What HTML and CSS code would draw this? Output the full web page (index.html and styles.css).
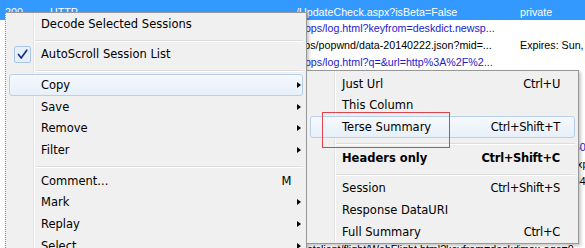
FILE: index.html
```html
<!DOCTYPE html>
<html>
<head>
<meta charset="utf-8">
<title>Fiddler context menu</title>
<link rel="stylesheet" href="styles.css">
</head>
<body>
<div class="list">
  <div class="row sel"><span>200</span><span>HTTP</span><span></span><span>/UpdateCheck.aspx?isBeta=False</span><span>private</span></div>
  <div class="row link"><span>200</span><span>HTTP</span><span>cidian.youdao.com</span><span>/apps/log.html?keyfrom=deskdict.newsp...</span><span></span></div>
  <div class="row"><span>200</span><span>HTTP</span><span>cidian.youdao.com</span><span>/tips/popwnd/data-20140222.json?mid=...</span><span>Expires: Sun, 23 Feb</span></div>
  <div class="row link"><span>200</span><span>HTTP</span><span>cidian.youdao.com</span><span>/apps/log.html?q=&amp;url=http%3A%2F%2...</span><span></span></div>
  <div class="row"><span>200</span><span>HTTP</span><span>cidian.youdao.com</span><span>/tips/popwnd/index.html</span><span></span></div>
  <div class="row"><span>200</span><span>HTTP</span><span>cidian.youdao.com</span><span>/tips/popwnd/style.css</span><span></span></div>
  <div class="row"><span>200</span><span>HTTP</span><span>cidian.youdao.com</span><span>/tips/popwnd/main.js</span><span></span></div>
  <div class="row"><span>200</span><span>HTTP</span><span>cidian.youdao.com</span><span>/tips/popwnd/img/bg.png</span><span></span></div>
  <div class="row link"><span>200</span><span>HTTP</span><span>cidian.youdao.com</span><span>/apps/log.html?keyfrom=deskdict.popwnd</span><span>max-age=3600, |</span></div>
  <div class="row"><span>200</span><span>HTTP</span><span>cidian.youdao.com</span><span>/tips/popwnd/data.json</span><span>no-cache; Expiry</span></div>
  <div class="row"><span>200</span><span>HTTP</span><span>cidian.youdao.com</span><span>/tips/popwnd/config.json</span><span>max-age=86400; g</span></div>
  <div class="row"><span>200</span><span>HTTP</span><span>cidian.youdao.com</span><span>/tips/popwnd/img/logo.png</span><span></span></div>
  <div class="row"><span>200</span><span>HTTP</span><span>cidian.youdao.com</span><span>/tips/popwnd/img/close.png</span><span></span></div>
  <div class="row"><span>200</span><span>HTTP</span><span>cidian.youdao.com</span><span>/tips/popwnd/img/icon.png</span><span></span></div>
  <div class="row"><span>200</span><span>HTTP</span><span>cidian.youdao.com</span><span>/dictclient/flight/WebFlight.html?keyfrom=deskdict.main</span><span>max-age=0</span></div>
</div>

<div class="menu main">
  <div class="item"><span class="icon"></span><span class="label">Decode Selected Sessions</span><span class="key"></span><span></span></div>
  <div class="sep"></div>
  <div class="item"><span class="icon"><span class="check"><svg width="11" height="11" viewBox="0 0 11 11"><path d="M1.5 5.5 L4.2 9 L9.8 1.2" fill="none" stroke="#1c2f83" stroke-width="1.7" stroke-linecap="round" stroke-linejoin="round"/></svg></span></span><span class="label">AutoScroll Session List</span><span class="key"></span><span></span></div>
  <div class="sep"></div>
  <div class="item hot"><span class="icon"></span><span class="label">Copy</span><span class="key"></span><span class="arrow"></span></div>
  <div class="item"><span class="icon"></span><span class="label">Save</span><span class="key"></span><span class="arrow"></span></div>
  <div class="item"><span class="icon"></span><span class="label">Remove</span><span class="key"></span><span class="arrow"></span></div>
  <div class="item"><span class="icon"></span><span class="label">Filter</span><span class="key"></span><span class="arrow"></span></div>
  <div class="sep"></div>
  <div class="item"><span class="icon"></span><span class="label">Comment...</span><span class="key">M</span><span></span></div>
  <div class="item"><span class="icon"></span><span class="label">Mark</span><span class="key"></span><span class="arrow"></span></div>
  <div class="item"><span class="icon"></span><span class="label">Replay</span><span class="key"></span><span class="arrow"></span></div>
  <div class="item"><span class="icon"></span><span class="label">Select</span><span class="key"></span><span class="arrow"></span></div>
</div>

<div class="menu sub">
  <div class="item"><span class="icon"></span><span class="label">Just Url</span><span class="key">Ctrl+U</span><span></span></div>
  <div class="item"><span class="icon"></span><span class="label">This Column</span><span class="key"></span><span></span></div>
  <div class="item hot"><span class="icon"></span><span class="label">Terse Summary</span><span class="key">Ctrl+Shift+T</span><span></span></div>
  <div class="sep"></div>
  <div class="item bold"><span class="icon"></span><span class="label">Headers only</span><span class="key">Ctrl+Shift+C</span><span></span></div>
  <div class="sep"></div>
  <div class="item"><span class="icon"></span><span class="label">Session</span><span class="key">Ctrl+Shift+S</span><span></span></div>
  <div class="item"><span class="icon"></span><span class="label">Response DataURI</span><span class="key"></span><span></span></div>
  <div class="item"><span class="icon"></span><span class="label">Full Summary</span><span class="key">Ctrl+C</span><span></span></div>
</div>

<div class="callout"></div>
</body>
</html>
```

FILE: styles.css
```css
* { box-sizing: border-box; }

html, body {
  margin: 0;
  padding: 0;
}

body {
  width: 585px;
  height: 248px;
  overflow: hidden;
  position: relative;
  background: #fff;
  font-family: "Liberation Sans", Arial, sans-serif;
}

/* session list behind the menus */
.list {
  font-size: 10.7px;
}

.row {
  display: grid;
  grid-template-columns: 45px 45px 201px 224px 90px;
  height: 17px;
  line-height: 17px;
  padding-left: 5px;
  white-space: nowrap;
  color: #000;
}

.row > span {
  overflow: hidden;
}

.row.sel {
  height: 20px;
  padding-top: 5px;
  line-height: 15px;
  background: #3399ff;
  color: #fff;
}

.row.link {
  color: #1c1ccc;
}

/* context menus */
.menu {
  position: absolute;
  background:
    linear-gradient(to right, transparent 27px, #e4e4e4 27px, #e4e4e4 28px, #fbfbfb 28px, #fbfbfb 29px, transparent 29px),
    #f0f0f0;
  border: 1px solid #979797;
  font-family: "DejaVu Sans", sans-serif;
  font-size: 11.5px;
  color: #000;
  box-shadow: 2px 2px 3px rgba(0, 0, 0, 0.22);
}

.menu.main {
  left: 5px;
  top: 12px;
  width: 302px;
  height: 250px;
  border-left: 1px dotted #8c8c8c;
}

.menu.sub {
  left: 306px;
  top: 70px;
  width: 273px;
  height: 174px;
  padding-top: 2px;
  z-index: 1;
}

.item {
  display: grid;
  grid-template-columns: 31px 1fr auto 11px;
  align-items: center;
  height: 21.67px;
  margin: 0 3px;
  border: 1px solid transparent;
  border-radius: 3px;
  white-space: nowrap;
}

.item.hot {
  border-color: #b8d0ec;
  background: linear-gradient(#f6f9fd, #e7eff9);
}

.item.bold {
  font-weight: bold;
}

.icon {
  display: flex;
  align-items: center;
}

.key {
  text-align: right;
  letter-spacing: -0.3px;
}

.sub .key {
  padding-right: 3px;
}

.arrow {
  width: 0;
  height: 0;
  margin-left: 6px;
  border-left: 4px solid #000;
  border-top: 3.5px solid transparent;
  border-bottom: 3.5px solid transparent;
}

.check {
  width: 17px;
  height: 17px;
  margin-left: 4px;
  border: 1px solid #a9c6e8;
  border-radius: 2px;
  background: #e6eff9;
  display: flex;
  align-items: center;
  justify-content: center;
}

.sep {
  height: 9px;
  margin: 0 3px 0 29px;
  background: linear-gradient(to bottom, transparent 5px, #dcdcdc 5px, #dcdcdc 6px, #ffffff 6px, #ffffff 7px, transparent 7px);
}

/* red annotation box */
.callout {
  position: absolute;
  left: 322px;
  top: 112px;
  width: 128px;
  height: 36px;
  border: 1px solid #e0424c;
  z-index: 2;
}
```
